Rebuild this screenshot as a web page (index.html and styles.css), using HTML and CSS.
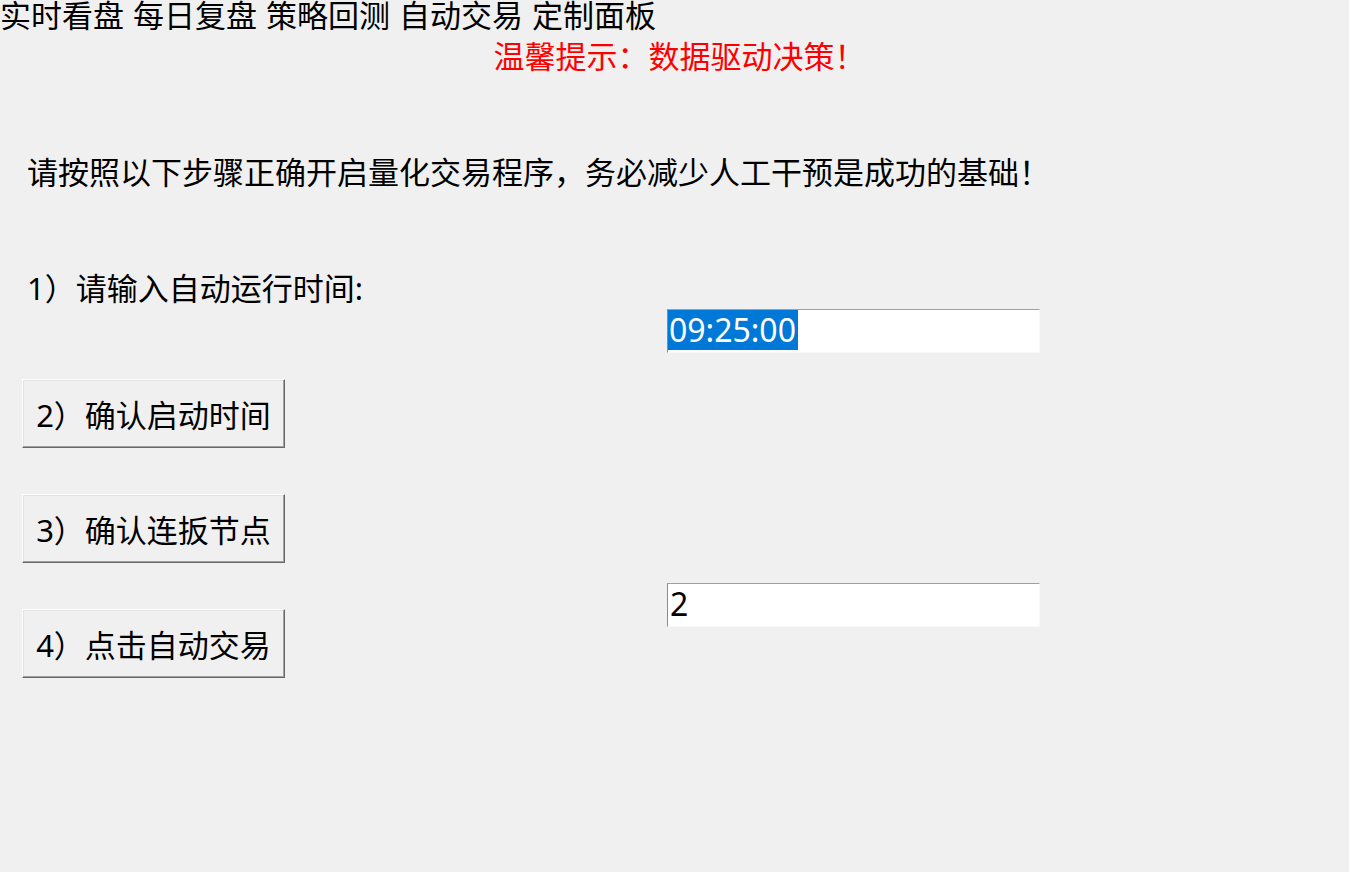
FILE: index.html
```html
<!DOCTYPE html>
<html lang="zh-CN">
<head>
<meta charset="utf-8">
<title>量化交易</title>
<link rel="stylesheet" href="styles.css">
</head>
<body>
<nav class="menu">
  <span class="menu-item">实时看盘</span>
  <span class="menu-item">每日复盘</span>
  <span class="menu-item">策略回测</span>
  <span class="menu-item">自动交易</span>
  <span class="menu-item">定制面板</span>
</nav>
<p class="tip">温馨提示：数据驱动决策！</p>
<p class="intro">请按照以下步骤正确开启量化交易程序，务必减少人工干预是成功的基础！</p>
<div class="steps">
  <div class="left-col">
    <p class="step-label">1）请输入自动运行时间:</p>
    <button class="btn btn-first" type="button">2）确认启动时间</button>
    <button class="btn" type="button">3）确认连扳节点</button>
    <button class="btn" type="button">4）点击自动交易</button>
  </div>
  <div class="right-col">
    <div class="entry entry-time"><span class="sel">09:25:00</span></div>
    <div class="entry entry-node"><span class="val">2</span></div>
  </div>
</div>
</body>
</html>
```

FILE: styles.css
```css
html, body {
  margin: 0;
  padding: 0;
  background: #f0f0f0;
}

body {
  width: 1349px;
  height: 872px;
  overflow: hidden;
  font-family: "Noto Sans", "Noto Sans CJK SC", sans-serif;
  font-size: 31px;
  line-height: 31px;
  color: #000;
}

p {
  margin: 0;
}

.menu {
  display: flex;
  gap: 9px;
  height: 31px;
  white-space: nowrap;
}

.tip {
  margin-top: 10px;
  text-align: center;
  color: #f00;
  padding-left: 10px;
}

.intro {
  margin-top: 85px;
  padding-left: 27px;
}

.steps {
  display: flex;
  margin-top: 85px;
  padding-left: 22px;
}

.left-col {
  width: 645px;
  display: flex;
  flex-direction: column;
  align-items: flex-start;
}

.step-label {
  margin-left: 5px;
  white-space: nowrap;
}

.btn {
  box-sizing: border-box;
  width: 263px;
  height: 69px;
  margin: 46px 0 0;
  padding: 4px 0 0;
  font-family: inherit;
  font-size: 31px;
  line-height: 31px;
  color: #000;
  background: #f0f0f0;
  border: 1px solid;
  border-color: #ffffff #696969 #696969 #ffffff;
  box-shadow: inset -1px -1px 0 #a0a0a0, inset 1px 1px 0 #e3e3e3;
  display: flex;
  align-items: center;
  justify-content: center;
  white-space: nowrap;
}

.btn-first {
  margin-top: 75px;
}

.right-col {
  display: flex;
  flex-direction: column;
}

.entry {
  box-sizing: border-box;
  width: 373px;
  height: 44px;
  background: #fff;
  border: 1px solid;
  border-color: #a0a0a0 #f8f8f8 #f8f8f8 #8a8a8a;
  font-family: "Noto Sans", sans-serif;
  font-size: 32px;
  line-height: 40px;
  white-space: nowrap;
}

.entry-time {
  margin-top: 36px;
}

.entry-node {
  margin-top: 230px;
}

.sel {
  display: inline-block;
  height: 40px;
  padding: 0 2px 0 1px;
  background: #0078d7;
  color: #fff;
}

.val {
  display: inline-block;
  padding-left: 2px;
}
```
